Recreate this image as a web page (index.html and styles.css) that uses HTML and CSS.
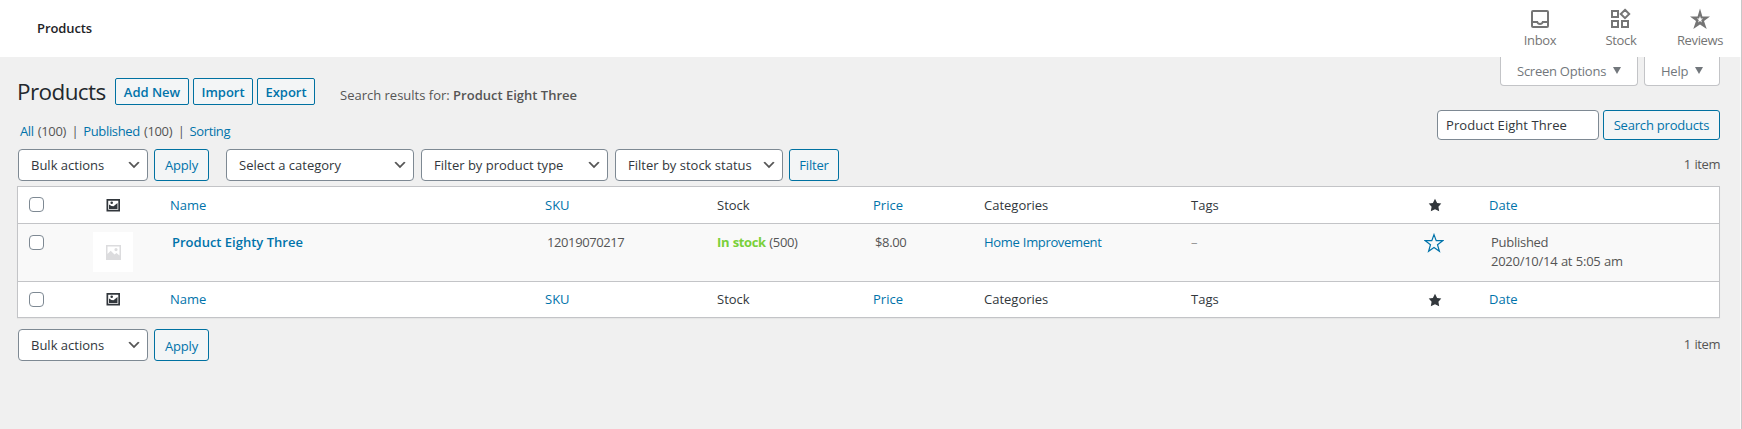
FILE: index.html
```html
<!DOCTYPE html>
<html lang="en">
<head>
<meta charset="utf-8">
<title>Products</title>
<link rel="stylesheet" href="styles.css">
</head>
<body>
<svg class="defs" width="0" height="0">
  <symbol id="picture" viewBox="0 0 14 13"><path fill="currentColor" fill-rule="evenodd" d="M.5 0H14v12.500H.5zM2.200 1.700v9.100h10.100V1.700zM5.700 2.500a1.300 1.300 0 1 1 0 2.600 1.300 1.300 0 0 1 0-2.600z"/><path fill="currentColor" d="M3 10V5.500l2.500 1.500 2 .2L11.500 4v6z"/></symbol>
  <symbol id="placeholder" viewBox="0 0 15 15"><path fill="currentColor" fill-rule="evenodd" d="M0 0h15v15H0zM1.500 1.500V9l3.200-3.200L8.500 9.500l2-1.500 3 2.500v-9zM10 3a1.600 1.600 0 1 1 0 3.200A1.600 1.600 0 0 1 10 3z"/></symbol>
  <symbol id="star" viewBox="0 0 20 20"><path fill="currentColor" d="m10 1 3 6 6 .75-4.120 4.620L16 19l-6-3-6 3 1.130-6.630L1 7.750 7 7z"/></symbol>
  <symbol id="chevron" viewBox="0 0 20 20"><path fill="currentColor" d="m5 6 5 5 5-5 2 1-7 7-7-7z"/></symbol>
</svg>
<header class="topbar">
  <span class="crumb">Products</span>
  <nav class="activity">
    <a class="tab"><svg width="24" height="24" viewBox="0 0 24 24"><path fill="currentColor" fill-rule="evenodd" d="M19 3H5a2 2 0 0 0-2 2v14c0 1.100.9 2 2 2h14a2 2 0 0 0 2-2V5a2 2 0 0 0-2-2zm0 16H5v-3h3.560c.69 1.190 1.970 2 3.450 2s2.750-.81 3.450-2H19zm0-5h-4.990c0 1.100-.9 2-2 2s-2-.9-2-2H5V5h14z"/></svg><span>Inbox</span></a>
    <a class="tab stock"><svg width="24" height="24" viewBox="0 0 24 24"><path fill="none" stroke="currentColor" stroke-width="2" d="M3 4h6v6H3zM3 14h6v6H3zM13 14h6v6h-6zM16 2.800 20.200 7 16 11.200 11.800 7z"/></svg><span>Stock</span></a>
    <a class="tab"><svg width="24" height="24" viewBox="0 0 24 24"><path fill="currentColor" fill-rule="evenodd" d="m12 1.500 2.400 8H22l-6 4.500 2.700 8-6.700-4.600L5.300 22 8 14 2 9.500h7.600zM12 9l-.9 2.600H8.900l1.900 1.500-.7 2.400 1.900-1.400 1.900 1.400-.7-2.400 1.900-1.500h-2.200z"/></svg><span>Reviews</span></a>
  </nav>
</header>
<div class="meta-links">
  <a class="meta options">Screen Options<i></i></a>
  <a class="meta help">Help<i></i></a>
</div>
<main class="wrap">
  <div class="heading">
    <h1>Products</h1>
    <a class="action add">Add New</a><a class="action import">Import</a><a class="action export">Export</a>
    <span class="results">Search results for: <b>Product Eight Three</b></span>
  </div>
  <div class="subrow">
    <div class="views"><a>All</a> <span>(100)</span><em>|</em><a>Published</a> <span>(100)</span><em>|</em><a>Sorting</a></div>
    <div class="search"><div class="input">Product Eight Three</div><a class="button find">Search products</a></div>
  </div>
  <div class="tablenav">
    <div class="select bulk">Bulk actions<svg><use href="#chevron"/></svg></div>
    <a class="button apply">Apply</a>
    <div class="select category">Select a category<svg><use href="#chevron"/></svg></div>
    <div class="select type">Filter by product type<svg><use href="#chevron"/></svg></div>
    <div class="select status">Filter by stock status<svg><use href="#chevron"/></svg></div>
    <a class="button filter">Filter</a>
    <span class="count">1 item</span>
  </div>
  <section class="table">
    <div class="row head">
      <i class="check"></i><svg class="pic"><use href="#picture"/></svg><a>Name</a><a>SKU</a><span>Stock</span><a>Price</a><span>Categories</span><span>Tags</span><svg class="star"><use href="#star"/></svg><a>Date</a>
    </div>
    <div class="row item">
      <i class="check"></i><div class="thumb"><svg><use href="#placeholder"/></svg></div><a class="name"><b>Product Eighty Three</b></a><span class="sku">12019070217</span><span><b class="instock">In stock</b> (500)</span><span class="price">$8.00</span><a>Home Improvement</a><span class="dash">–</span><svg class="fav" viewBox="0 0 20 20"><path fill="none" stroke="currentColor" stroke-width="1.200" d="m10 1.600 2.200 6.100h6.500l-5.200 4 1.900 6.600-5.400-3.900-5.400 3.900 1.900-6.600-5.200-4h6.500z"/></svg><span class="date">Published<br>2020/10/14 at 5:05 am</span>
    </div>
    <div class="row head foot">
      <i class="check"></i><svg class="pic"><use href="#picture"/></svg><a>Name</a><a>SKU</a><span>Stock</span><a>Price</a><span>Categories</span><span>Tags</span><svg class="star"><use href="#star"/></svg><a>Date</a>
    </div>
  </section>
  <div class="tablenav bottom">
    <div class="select bulk">Bulk actions<svg><use href="#chevron"/></svg></div>
    <a class="button apply">Apply</a>
    <span class="count">1 item</span>
  </div>
</main>
</body>
</html>
```
FILE: styles.css
```css
* { box-sizing: border-box; }
body { margin: 0; height: 429px; overflow: hidden; background: #f0f0f0; color: #555; font: 13px/19px "Open Sans", "Noto Sans", sans-serif; border-right: 1px solid #c8c8c8; box-shadow: inset -1px 0 #fafafa; }
a { color: #0073aa; }
b { font-weight: 600; letter-spacing: 0; }
i { display: block; }
.defs { position: absolute; }
.topbar { height: 57px; background: #fff; display: flex; justify-content: space-between; padding: 0 1px 0 37px; }
.crumb { color: #1d2327; font-weight: 600; line-height: 56px; letter-spacing: -.1px; }
.activity { display: flex; }
.tab { width: 80px; height: 57px; padding-top: 7px; display: flex; flex-direction: column; align-items: center; color: #757575; line-height: 18px; letter-spacing: -.35px; }
.stock { padding-left: 2px; }
.meta-links { display: flex; justify-content: flex-end; gap: 6px; padding-right: 21px; height: 29px; }
.meta { display: flex; align-items: center; background: #fff; border: 1px solid #c3c4c7; border-top: 0; border-radius: 0 0 4px 4px; color: #72777c; padding: 0 16px; justify-content: space-between; letter-spacing: -.25px; }
.meta i { border: 4.5px solid transparent; border-top: 7px solid #72777c; border-bottom: 0; margin-bottom: 2px; }
.options { width: 138px; }
.help { width: 76px; }
.wrap { padding: 0 21px 0 17px; margin-top: -8px; }
.heading { display: flex; align-items: flex-start; height: 32px; }
h1 { margin: 0; width: 98px; font-size: 22.5px; line-height: 28px; font-weight: 400; color: #23282d; letter-spacing: -.6px; }
.action { height: 27px; border: 1px solid #0071a1; border-radius: 2px; background: #f3f5f6; font-weight: 600; line-height: 26px; text-align: center; margin-right: 4px; }
.add { width: 74px; }
.import { width: 60px; }
.export { width: 58px; }
.results { margin: 8px 0 0 21px; white-space: pre; }
.subrow { display: flex; justify-content: space-between; height: 39px; }
.views { padding: 12px 0 0 3px; letter-spacing: -.35px; word-spacing: 1px; }
.views em { font-style: normal; margin: 0 5px 0 5.500px; }
.search { display: flex; gap: 4px; height: 30px; }
.input, .select { background: #fff; border: 1px solid #7e8993; border-radius: 4px; color: #32373c; }
.input { width: 162px; line-height: 29px; padding-left: 8px; letter-spacing: .06px; }
.button { border: 1px solid #0071a1; border-radius: 3px; background: #f3f5f6; text-align: center; line-height: 30px; letter-spacing: -.2px; }
.find { width: 117px; line-height: 29px; }
.tablenav { height: 37px; display: flex; align-items: flex-start; padding-left: 1px; }
.select { height: 32px; padding: 0 5px 0 12px; line-height: 30px; display: flex; justify-content: space-between; align-items: center; }
.select svg { width: 16px; height: 16px; color: #555; }
.tablenav .button { height: 32px; }
.bulk { width: 130px; margin-right: 6px; }
.apply { width: 55px; margin-right: 17px; }
.category { width: 188px; margin-right: 7px; }
.type { width: 187px; margin-right: 7px; }
.status { width: 168px; margin-right: 6px; }
.filter { width: 50px; }
.count { margin-left: auto; padding-top: 6px; letter-spacing: -.45px; word-spacing: 1px; }
.table { border: 1px solid #c3c4c7; background: #fff; box-shadow: 0 1px 1px rgba(0,0,0,.04); }
.row { display: grid; grid-template-columns: 75px 77px 375px 172px 156px 111px 207px 232px 66px 1fr; }
.head { height: 37px; align-items: center; color: #32373c; border-bottom: 1px solid #c3c4c7; }
.foot { border-bottom: 0; height: 35px; }
.check { width: 15px; height: 15px; border: 1px solid #7e8993; border-radius: 4px; background: #fff; margin: -1px 0 0 11px; }
.pic { width: 14px; height: 13px; margin: 0 0 0 13px; color: #32373c; }
.star { width: 14px; height: 14px; margin-left: 4.500px; color: #32373c; }
.item { background: #f9f9f9; height: 58px; border-bottom: 1px solid #c3c4c7; padding-top: 9px; letter-spacing: -.35px; word-spacing: .5px; }
.item .check { margin-top: 2px; }
.thumb { width: 40px; height: 40px; margin-top: -1px; background: #fff; color: #dcdcde; display: grid; place-items: center; }
.thumb svg { width: 15px; height: 15px; }
.name { padding-left: 2px; word-spacing: 0; }
.sku { padding-left: 2px; letter-spacing: -.45px; letter-spacing: -.4px; }
.price { padding-left: 2px; }
.instock { color: #7ad03a; font-weight: 700; letter-spacing: -.35px; }
.dash { color: #999; }
.fav { width: 20px; height: 20px; margin-left: 1px; color: #0073aa; }
.date { padding-left: 2px; letter-spacing: -.27px; }
.bottom { padding-top: 11px; height: 43px; }
.bottom .select, .bottom .button { line-height: 32px; }
```
